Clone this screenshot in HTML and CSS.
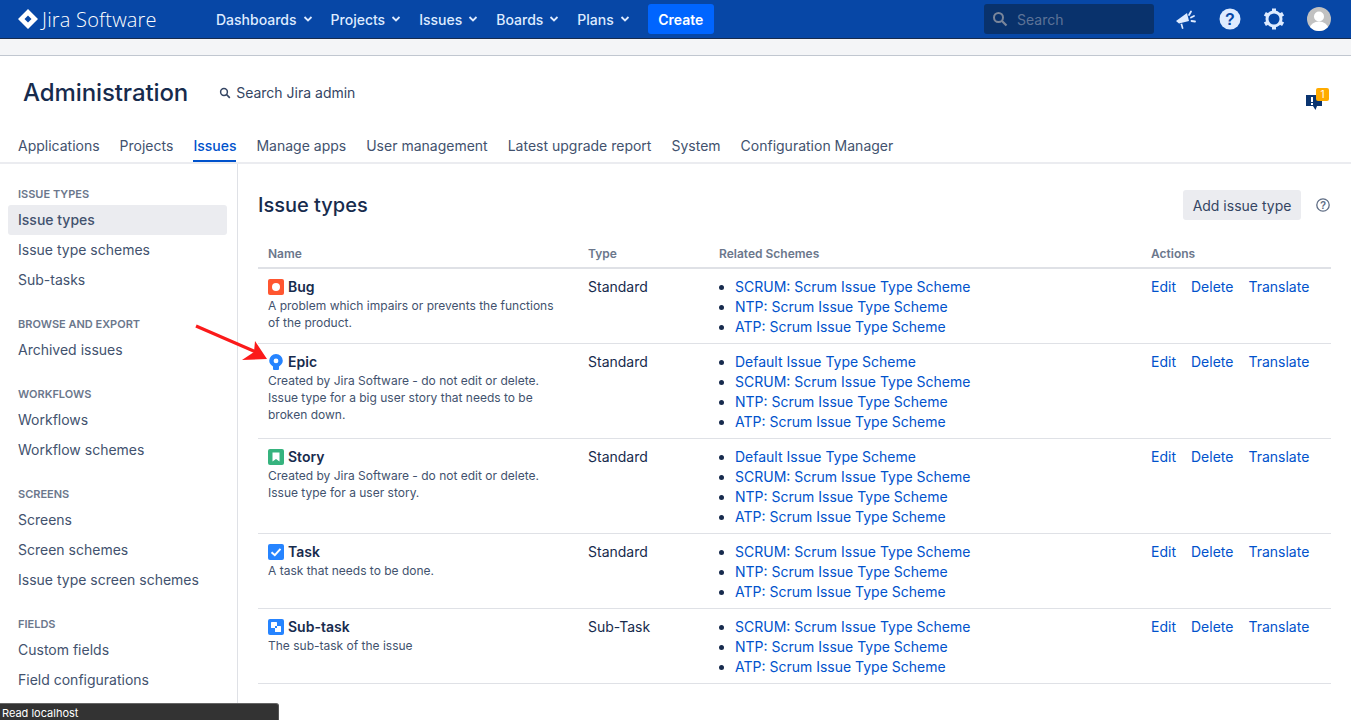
FILE: index.html
```html
<!DOCTYPE html>
<html lang="en">
<head>
<meta charset="utf-8">
<title>Issue types</title>
<link rel="stylesheet" href="styles.css">
</head>
<body>
<header class="topbar">
  <a class="brand">
    <svg class="brand-mark" width="20" height="20" viewBox="0 0 20 20"><path fill="#fff" fill-rule="evenodd" d="M10 0 L20 10 L10 20 L0 10 Z M10 6.5 L6.5 10 L10 13.500 L13.500 10 Z"/><path fill="#fff" d="M10 6.500 L6.500 3 L10 0 Z" opacity="0"/></svg>
    <span class="brand-name">Jira Software</span>
  </a>
  <nav class="topnav">
    <a class="topnav-item">Dashboards<svg class="chev" width="10" height="6" viewBox="0 0 10 6"><path d="M1.500 1 L5 4.500 L8.500 1" fill="none" stroke="#deebff" stroke-width="1.800"/></svg></a>
    <a class="topnav-item">Projects<svg class="chev" width="10" height="6" viewBox="0 0 10 6"><path d="M1.500 1 L5 4.500 L8.500 1" fill="none" stroke="#deebff" stroke-width="1.800"/></svg></a>
    <a class="topnav-item">Issues<svg class="chev" width="10" height="6" viewBox="0 0 10 6"><path d="M1.500 1 L5 4.500 L8.500 1" fill="none" stroke="#deebff" stroke-width="1.800"/></svg></a>
    <a class="topnav-item">Boards<svg class="chev" width="10" height="6" viewBox="0 0 10 6"><path d="M1.500 1 L5 4.500 L8.500 1" fill="none" stroke="#deebff" stroke-width="1.800"/></svg></a>
    <a class="topnav-item">Plans<svg class="chev" width="10" height="6" viewBox="0 0 10 6"><path d="M1.500 1 L5 4.500 L8.500 1" fill="none" stroke="#deebff" stroke-width="1.800"/></svg></a>
  </nav>
  <a class="create">Create</a>
  <div class="top-right">
    <div class="searchbox">
      <svg width="16" height="16" viewBox="0 0 16 16"><circle cx="6.500" cy="6.500" r="4.500" fill="none" stroke="#7a869a" stroke-width="2"/><path d="M10 10 L14.500 14.500" stroke="#7a869a" stroke-width="2.200"/></svg>
      <span>Search</span>
    </div>
    <svg class="top-icon" width="22" height="22" viewBox="0 0 22 22"><path fill="#deebff" d="M1 13 L12 5 L14 13 L4 15.500 Z"/><path fill="#deebff" d="M5.500 16 L7.200 15.600 L8.500 20.500 L7 21 Z"/><path d="M14 7 L16 3.500 M16 9.500 L19 8 M16.500 13 L20 13.500" stroke="#deebff" stroke-width="1.800" stroke-linecap="round" fill="none"/></svg>
    <svg class="top-icon" width="22" height="22" viewBox="0 0 22 22"><circle cx="11" cy="11" r="10.500" fill="#deebff"/><text x="11" y="16.500" text-anchor="middle" class="q-glyph">?</text></svg>
    <svg class="top-icon" width="22" height="22" viewBox="0 0 22 22"><circle cx="11" cy="11" r="7" fill="none" stroke="#deebff" stroke-width="3"/><g stroke="#deebff" stroke-width="4"><path d="M11 0.500 V4"/><path d="M11 18 V21.500"/><path d="M1.900 5.700 L5 7.500"/><path d="M17 14.500 L20.100 16.300"/><path d="M1.900 16.300 L5 14.500"/><path d="M17 7.500 L20.100 5.700"/></g></svg>
    <svg class="avatar" width="24" height="24" viewBox="0 0 24 24"><defs><clipPath id="av"><circle cx="12" cy="12" r="12"/></clipPath></defs><circle cx="12" cy="12" r="12" fill="#c1c1c1"/><g clip-path="url(#av)" fill="#fff"><circle cx="12" cy="9.500" r="5"/><ellipse cx="12" cy="21" rx="9" ry="6.500"/></g></svg>
  </div>
</header>
<div class="strip"></div>
<section class="admin-head">
  <div class="admin-title-row">
    <h1 class="admin-title">Administration</h1>
    <a class="admin-search"><svg width="12" height="12" viewBox="0 0 12 12"><circle cx="5" cy="5" r="3.400" fill="none" stroke="#344563" stroke-width="1.500"/><path d="M7.500 7.500 L10.800 10.800" stroke="#344563" stroke-width="1.700"/></svg>Search Jira admin</a>
    <div class="feedback">
      <svg width="18" height="19" viewBox="0 0 18 19"><path fill="#0a3470" d="M1 3 H17 V14 H12 L10.500 18 L8 14 H1 Z"/><path d="M7 5 V10" stroke="#fff" stroke-width="2"/><path d="M7 11 V13" stroke="#fff" stroke-width="2"/></svg>
      <span class="feedback-badge">1</span>
    </div>
  </div>
  <nav class="tabs">
    <a class="tab">Applications</a>
    <a class="tab">Projects</a>
    <a class="tab tab-active">Issues</a>
    <a class="tab">Manage apps</a>
    <a class="tab">User management</a>
    <a class="tab">Latest upgrade report</a>
    <a class="tab">System</a>
    <a class="tab">Configuration Manager</a>
  </nav>
</section>
<div class="layout">
  <aside class="sidebar">
    <div class="side-group">
      <h4 class="side-head">Issue types</h4>
      <a class="side-item side-active">Issue types</a>
      <a class="side-item">Issue type schemes</a>
      <a class="side-item">Sub-tasks</a>
    </div>
    <div class="side-group">
      <h4 class="side-head">Browse and export</h4>
      <a class="side-item">Archived issues</a>
    </div>
    <div class="side-group">
      <h4 class="side-head">Workflows</h4>
      <a class="side-item">Workflows</a>
      <a class="side-item">Workflow schemes</a>
    </div>
    <div class="side-group">
      <h4 class="side-head">Screens</h4>
      <a class="side-item">Screens</a>
      <a class="side-item">Screen schemes</a>
      <a class="side-item">Issue type screen schemes</a>
    </div>
    <div class="side-group">
      <h4 class="side-head">Fields</h4>
      <a class="side-item">Custom fields</a>
      <a class="side-item">Field configurations</a>
    </div>
  </aside>
  <main class="content">
    <div class="content-head">
      <h2 class="content-title">Issue types</h2>
      <a class="btn">Add issue type</a>
      <svg class="help" width="14" height="14" viewBox="0 0 14 14"><circle cx="7" cy="7" r="6.200" fill="none" stroke="#5e6c84" stroke-width="1.300"/><text x="7" y="10.500" text-anchor="middle" class="help-glyph">?</text></svg>
    </div>
    <table class="types">
      <thead>
        <tr><th class="c-name">Name</th><th class="c-type">Type</th><th class="c-schemes">Related Schemes</th><th>Actions</th></tr>
      </thead>
      <tbody>
        <tr>
          <td><div class="type-name"><svg width="16" height="16" viewBox="0 0 16 16"><rect width="16" height="16" rx="2" fill="#ff5630"/><circle cx="8" cy="8" r="4" fill="#fff"/></svg>Bug</div><p class="type-desc">A problem which impairs or prevents the functions of the product.</p></td>
          <td>Standard</td>
          <td><ul><li><a>SCRUM: Scrum Issue Type Scheme</a></li><li><a>NTP: Scrum Issue Type Scheme</a></li><li><a>ATP: Scrum Issue Type Scheme</a></li></ul></td>
          <td><div class="actions"><a>Edit</a><a>Delete</a><a>Translate</a></div></td>
        </tr>
        <tr>
          <td><div class="type-name"><svg width="16" height="16" viewBox="0 0 16 16"><path fill="#2684ff" fill-rule="evenodd" d="M8 0 A6.800 6.800 0 0 1 14.800 6.800 C14.800 9.800 12.500 11.500 11 12.500 L11 15 A1 1 0 0 1 10 16 H6 A1 1 0 0 1 5 15 L5 12.500 C3.500 11.500 1.200 9.800 1.200 6.800 A6.800 6.800 0 0 1 8 0 Z M8 4.500 A2.400 2.400 0 1 0 8 9.300 A2.400 2.400 0 1 0 8 4.500 Z"/></svg>Epic</div><p class="type-desc">Created by Jira Software - do not edit or delete. Issue type for a big user story that needs to be broken down.</p></td>
          <td>Standard</td>
          <td><ul><li><a>Default Issue Type Scheme</a></li><li><a>SCRUM: Scrum Issue Type Scheme</a></li><li><a>NTP: Scrum Issue Type Scheme</a></li><li><a>ATP: Scrum Issue Type Scheme</a></li></ul></td>
          <td><div class="actions"><a>Edit</a><a>Delete</a><a>Translate</a></div></td>
        </tr>
        <tr>
          <td><div class="type-name"><svg width="16" height="16" viewBox="0 0 16 16"><rect width="16" height="16" rx="2" fill="#36b37e"/><path fill="#fff" d="M4.500 3.500 H11.500 V12.500 L8 10 L4.500 12.500 Z"/></svg>Story</div><p class="type-desc">Created by Jira Software - do not edit or delete. Issue type for a user story.</p></td>
          <td>Standard</td>
          <td><ul><li><a>Default Issue Type Scheme</a></li><li><a>SCRUM: Scrum Issue Type Scheme</a></li><li><a>NTP: Scrum Issue Type Scheme</a></li><li><a>ATP: Scrum Issue Type Scheme</a></li></ul></td>
          <td><div class="actions"><a>Edit</a><a>Delete</a><a>Translate</a></div></td>
        </tr>
        <tr>
          <td><div class="type-name"><svg width="16" height="16" viewBox="0 0 16 16"><rect width="16" height="16" rx="2" fill="#2684ff"/><path d="M3.500 8.200 L6.800 11.200 L12.500 4.800" fill="none" stroke="#fff" stroke-width="2"/></svg>Task</div><p class="type-desc">A task that needs to be done.</p></td>
          <td>Standard</td>
          <td><ul><li><a>SCRUM: Scrum Issue Type Scheme</a></li><li><a>NTP: Scrum Issue Type Scheme</a></li><li><a>ATP: Scrum Issue Type Scheme</a></li></ul></td>
          <td><div class="actions"><a>Edit</a><a>Delete</a><a>Translate</a></div></td>
        </tr>
        <tr>
          <td><div class="type-name"><svg width="16" height="16" viewBox="0 0 16 16"><rect width="16" height="16" rx="2" fill="#2684ff"/><rect x="3" y="3" width="6" height="6" rx="0.500" fill="#fff"/><rect x="7" y="7" width="6" height="6" rx="0.500" fill="#fff"/><rect x="7" y="7" width="2" height="2" fill="#2684ff"/></svg>Sub-task</div><p class="type-desc">The sub-task of the issue</p></td>
          <td>Sub-Task</td>
          <td><ul><li><a>SCRUM: Scrum Issue Type Scheme</a></li><li><a>NTP: Scrum Issue Type Scheme</a></li><li><a>ATP: Scrum Issue Type Scheme</a></li></ul></td>
          <td><div class="actions"><a>Edit</a><a>Delete</a><a>Translate</a></div></td>
        </tr>
      </tbody>
    </table>
  </main>
</div>
<svg class="arrow" width="80" height="40" viewBox="0 0 80 40"><path d="M2 3 L62 29" stroke="#fb1a1a" stroke-width="3.200" fill="none"/><path fill="#fb1a1a" d="M73 36 L48 37 L60 29 L61 18 Z"/></svg>
<div class="statusbar">Read localhost</div>
</body>
</html>
```
FILE: styles.css
```css
* { box-sizing: border-box; }
html, body { margin: 0; padding: 0; height: 720px; overflow: hidden; background: #fff; }
body { font-family: Inter, "Liberation Sans", sans-serif; font-size: 14px; color: #172b4d; position: relative; }
a { text-decoration: none; color: inherit; }

.topbar { height: 39px; background: #0747a6; border-bottom: 1px solid #172b4d; display: flex; align-items: center; padding-left: 18px; color: #deebff; }
.brand { display: flex; align-items: center; width: 198px; color: #fff; }
.brand-mark { flex: none; }
.brand-name { margin-left: 4px; font-size: 20px; font-weight: 300; font-family: "Open Sans", sans-serif; letter-spacing: 0.2px; white-space: nowrap; }
.topnav { display: flex; gap: 18px; }
.topnav-item { display: flex; align-items: center; font-weight: 500; white-space: nowrap; }
.chev { margin-left: 6px; }
.create { margin-left: 18px; width: 66px; height: 30px; background: #0065ff; border-radius: 3px; color: #fff; font-weight: 600; display: flex; align-items: center; justify-content: center; }
.top-right { margin-left: auto; display: flex; align-items: center; padding-right: 20px; }
.searchbox { width: 170px; height: 30px; background: #09326c; border-radius: 3px; display: flex; align-items: center; gap: 9px; padding-left: 8px; color: #5d7397; margin-right: 21px; }
.top-icon { margin-right: 22px; flex: none; }
.q-glyph { font-family: "Liberation Sans", sans-serif; font-weight: 700; font-size: 16px; fill: #0747a6; }
.avatar { flex: none; }

.strip { height: 17px; background: #f4f5f7; border-bottom: 1px solid #c1c7d0; }

.admin-head { height: 108px; border-bottom: 2px solid #ebecf0; padding-left: 18px; display: flex; flex-direction: column; }
.admin-title-row { height: 73px; display: flex; align-items: center; padding-left: 5px; padding-top: 0; }
.admin-title { margin: 0; font-size: 24px; font-weight: 500; letter-spacing: -0.1px; color: #172b4d; }
.admin-search { margin-left: 31px; display: flex; align-items: center; gap: 5px; color: #344563; }
.feedback { margin-left: auto; margin-right: 22px; position: relative; width: 24px; height: 24px; margin-top: 22px; }
.feedback-badge { position: absolute; left: 11px; top: -4px; width: 13px; height: 13px; background: #ffab00; border-radius: 2px; color: #fff; font-size: 10px; line-height: 13px; text-align: center; }
.tabs { display: flex; gap: 20px; height: 33px; }
.tab { height: 33px; padding-top: 8px; line-height: 18px; color: #42526e; white-space: nowrap; border-bottom: 2px solid transparent; }
.tab-active { color: #0052cc; font-weight: 500; border-bottom-color: #0052cc; }

.layout { display: flex; height: 556px; }
.sidebar { width: 238px; flex: none; border-right: 1px solid #dfe1e6; padding: 20px 10px 0 8px; overflow: hidden; }
.side-group { margin-bottom: 19px; }
.side-head { margin: 0 0 1px; height: 20px; line-height: 20px; padding-left: 10px; font-size: 11px; font-weight: 600; text-transform: uppercase; color: #6b778c; }
.side-item { display: block; height: 30px; line-height: 30px; padding-left: 10px; color: #42526e; border-radius: 3px; white-space: nowrap; }
.side-active { background: #ebecf0; height: 30px; width: 219px; font-weight: 500; }

.content { flex: 1; padding: 0 20px; min-width: 0; }
.content-head { height: 76px; display: flex; align-items: center; padding-top: 6px; }
.content-title { margin: 0; font-size: 20px; font-weight: 500; color: #172b4d; flex: 1; }
.btn { width: 118px; height: 30px; background: #ebecf0; border-radius: 3px; display: flex; align-items: center; justify-content: center; color: #344563; }
.help { margin-left: 15px; margin-right: 1px; }
.help-glyph { font-family: "Liberation Sans", sans-serif; font-size: 10px; font-weight: 700; fill: #5e6c84; }

.types { width: 1073px; border-collapse: collapse; table-layout: fixed; }
.c-name { width: 320px; }
.c-type { width: 131px; }
.c-schemes { width: 432px; }
.types th { height: 28px; padding: 0 10px; text-align: left; font-size: 12px; font-weight: 600; color: #6b778c; border-bottom: 2px solid #dfe1e6; }
.types td { padding: 8px 10px 6px; vertical-align: top; line-height: 20px; color: #172b4d; border-bottom: 1px solid #dfe1e6; }
.type-name { display: flex; align-items: center; gap: 4px; font-weight: 600; color: #172b4d; height: 20px; }
.type-name svg { flex: none; }
.type-desc { margin: 0; font-size: 12px; line-height: 17px; color: #42526e; padding-right: 0; }
.types ul { margin: 0; padding: 0 0 0 16px; }
.types li { line-height: 20px; }
.types li a, .actions a { color: #0052cc; }
.actions { display: flex; gap: 15px; padding-left: 0; }

.arrow { position: absolute; left: 194px; top: 323px; }
.statusbar { position: absolute; left: 0; top: 703px; width: 279px; height: 17px; background: #333; border-top: 1px solid #666; border-right: 1px solid #555; border-top-right-radius: 3px; color: #fff; font-size: 11px; line-height: 18px; padding-left: 2px; }
```
